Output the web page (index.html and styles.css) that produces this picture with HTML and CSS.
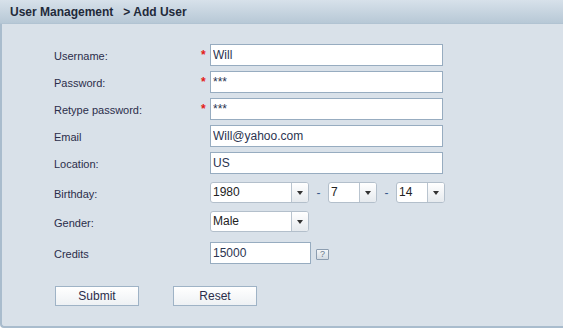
FILE: index.html
```html
<!DOCTYPE html>
<html lang="en">
<head>
  <meta charset="UTF-8" />
  <title>User Management - Add User</title>
  <link rel="stylesheet" href="styles.css">
</head>
<body>
  <div class="panel">
    <div class="panel-header">User Management&nbsp;&nbsp; &gt; Add User</div>

    <form class="user-form" onsubmit="return false">
      <div class="row">
        <label class="label">Username:</label>
        <span class="req">*</span>
        <input class="text-input" type="text" value="Will" />
      </div>
      <div class="row">
        <label class="label">Password:</label>
        <span class="req">*</span>
        <input class="text-input" type="text" value="***" />
      </div>
      <div class="row">
        <label class="label">Retype password:</label>
        <span class="req">*</span>
        <input class="text-input" type="text" value="***" />
      </div>
      <div class="row">
        <label class="label">Email</label>
        <span class="req"></span>
        <input class="text-input" type="text" value="Will@yahoo.com" />
      </div>
      <div class="row">
        <label class="label">Location:</label>
        <span class="req"></span>
        <input class="text-input" type="text" value="US" />
      </div>

      <div class="row row-birthday">
        <label class="label">Birthday:</label>
        <span class="req"></span>
        <div class="combo combo-wide">
          <span class="combo-value">1980</span>
          <span class="combo-arrow"></span>
        </div>
        <span class="dash">-</span>
        <div class="combo combo-small">
          <span class="combo-value">7</span>
          <span class="combo-arrow"></span>
        </div>
        <span class="dash">-</span>
        <div class="combo combo-small">
          <span class="combo-value">14</span>
          <span class="combo-arrow"></span>
        </div>
      </div>

      <div class="row row-gender">
        <label class="label">Gender:</label>
        <span class="req"></span>
        <div class="combo combo-wide">
          <span class="combo-value">Male</span>
          <span class="combo-arrow"></span>
        </div>
      </div>

      <div class="row row-credits">
        <label class="label">Credits</label>
        <span class="req"></span>
        <input class="text-input short" type="text" value="15000" />
        <span class="help">?</span>
      </div>

      <div class="buttons">
        <button class="btn">Submit</button>
        <button class="btn">Reset</button>
      </div>
    </form>
  </div>
</body>
</html>
```

FILE: styles.css
```css
body {
  margin: 0;
  font-family: 'Liberation Sans', Arial, sans-serif;
  font-size: 11px;
  color: #2b2d4a;
  background: #ffffff;
}

/* Painel */
.panel {
  height: 326px;
  background: #d9e1e9;
  border-left: 2px solid #a9bccd;
  border-bottom: 2px solid #a9bccd;
  border-bottom-left-radius: 4px;
}

.panel-header {
  height: 24px;
  line-height: 25px;
  margin-left: -2px;
  padding-left: 10px;
  background: linear-gradient(to bottom, #d7e1ea, #b7c8d6);
  border-bottom: 1px solid #b1c3d2;
  font-weight: bold;
  font-size: 12px;
  color: #1f2a3a;
  box-sizing: border-box;
}

/* Formulario */
.user-form {
  padding: 20px 0 0 52px;
}

.row {
  display: flex;
  align-items: center;
  height: 22px;
  margin-bottom: 5px;
}

.row-birthday {
  margin-top: 8px;
  height: 21px;
  margin-bottom: 8px;
}

.row-gender {
  height: 21px;
  margin-bottom: 10px;
}

.row-credits {
  height: 22px;
}

.label {
  width: 147px;
  padding-top: 2px;
}

.req {
  width: 9px;
  color: #e41b1b;
  font-size: 12px;
  font-weight: bold;
  line-height: 12px;
}

.text-input {
  width: 233px;
  height: 22px;
  box-sizing: border-box;
  border: 1px solid #97acc0;
  margin: 0;
  padding: 0 2px;
  font-family: 'Liberation Sans', Arial, sans-serif;
  font-size: 12px;
  color: #2b3450;
  background: #fff;
  outline: none;
}

.text-input.short {
  width: 101px;
}

/* Combos */
.combo {
  display: flex;
  height: 21px;
  box-sizing: border-box;
  border: 1px solid #b3bfcb;
  border-radius: 3px;
  background: #fff;
  font-size: 12px;
  color: #222;
}

.combo-wide {
  width: 99px;
}

.combo-small {
  width: 49px;
}

.combo-value {
  flex: 1;
  padding-left: 2px;
  line-height: 19px;
}

.combo-arrow {
  width: 16px;
  border-left: 1px solid #b9c4cf;
  border-radius: 0 2px 2px 0;
  background: linear-gradient(to bottom, #ffffff, #e6eaee);
  position: relative;
}

.combo-arrow::after {
  content: '';
  position: absolute;
  left: 5px;
  top: 8px;
  border-left: 3.5px solid transparent;
  border-right: 3.5px solid transparent;
  border-top: 4px solid #333;
}

.dash {
  width: 19px;
  text-align: center;
  color: #3b5b8c;
  font-size: 12px;
}

.help {
  margin-left: 5px;
  width: 11px;
  height: 9px;
  border: 1px solid #8c9db0;
  border-radius: 1px;
  background: linear-gradient(to bottom, #f4f6f8, #d4dbe2);
  font-size: 9px;
  line-height: 9px;
  text-align: center;
  color: #6a7a8e;
  margin-top: 3px;
}

/* Botoes */
.buttons {
  display: flex;
  gap: 34px;
  margin-top: 22px;
  padding-left: 1px;
}

.btn {
  width: 84px;
  height: 20px;
  border: 1px solid #9fb3c6;
  background: linear-gradient(to bottom, #ffffff, #eef1f4);
  font-family: 'Liberation Sans', Arial, sans-serif;
  font-size: 12px;
  color: #2b2d4a;
  padding: 0;
  cursor: pointer;
}
```
